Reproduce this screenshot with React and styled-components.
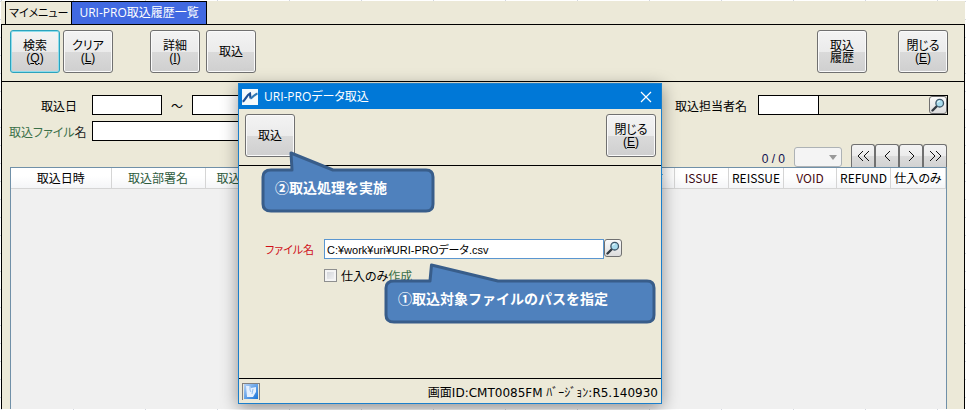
import styled, { createGlobalStyle } from 'styled-components'

const columns = [
  { label: '取込日時', width: 100 },
  { label: '取込部署名', width: 94, color: '#2c5a3c' },
  { label: '取込担当者名', width: 95, color: '#2c5a3c' },
  { label: '取込ファイル名' },
  { label: 'PDF', width: 46 },
  { label: 'ISSUE', width: 54, color: '#3a0a12' },
  { label: 'REISSUE', width: 55 },
  { label: 'VOID', width: 53, color: '#4a0a12' },
  { label: 'REFUND', width: 54 },
  { label: '仕入のみ', width: 55 },
]

const pagers = [
  { name: '最初', points: ['7,2 2,7 7,12', '13,2 8,7 13,12'] },
  { name: '前へ', points: ['10,2 5,7 10,12'] },
  { name: '次へ', points: ['5,2 10,7 5,12'] },
  { name: '最後', points: ['2,2 7,7 2,12', '8,2 13,7 8,12'] },
]

const Magnifier = () => (
  <svg width="14" height="14" viewBox="0 0 14 14">
    <path d="M1.5 12.5L6 8" stroke="#333a42" strokeWidth="2.4" strokeLinecap="round" />
    <circle cx="8.7" cy="5.2" r="3.8" fill="#a9dcee" stroke="#3c5568" strokeWidth="1.3" />
    <path d="M6.6 4.6a2.3 2.3 0 0 1 2.2-1.6" fill="none" stroke="#fff" strokeWidth="1" />
  </svg>
)

const AppLogo = () => (
  <svg width="16" height="16" viewBox="0 0 16 16">
    <rect width="16" height="16" fill="#f4fafc" />
    <path d="M0.500 12.500C3 12 4.500 6 8 4.500L8.500 9.500" fill="none" stroke="#1c4f96" strokeWidth="2.2" />
    <path d="M8.500 9.500C10.500 9 12 5.500 15.500 4.500" fill="none" stroke="#2f78b4" strokeWidth="2.2" />
  </svg>
)

const StatusIcon = () => (
  <svg width="14" height="15" viewBox="0 0 14 15">
    <defs>
      <linearGradient id="status" x1="0" y1="0" x2="1" y2="1">
        <stop offset="0" stopColor="#b4d2f6" />
        <stop offset="1" stopColor="#1673d8" />
      </linearGradient>
    </defs>
    <rect width="14" height="15" fill="url(#status)" />
    <path d="M2 2h4l1 2 5-1v5l-3 5H3z" fill="#e4f0fe" />
    <path d="M6 2v4l1 2M9 5l-1 5" fill="none" stroke="#8cbcf0" strokeWidth="1" />
  </svg>
)

const ToolButton = ({ label, accessKey, sub, active }) => (
  <StyledToolButton type="button" $active={active}>
    <span>{label}</span>
    {accessKey && <span>(<u>{accessKey}</u>)</span>}
    {sub && <span>{sub}</span>}
  </StyledToolButton>
)

const Callout = ({ text, variant }) => (
  <StyledCallout className={variant}>
    {variant === 'first' ? (
      <svg width="273" height="62" viewBox="0 0 273 62">
        <path d="M10 18H46L47.500 2L114 18H263Q270 18 270 25V52Q270 59 263 59H10Q2 59 2 52V25Q2 18 10 18Z" />
      </svg>
    ) : (
      <svg width="176" height="64" viewBox="0 0 176 64">
        <path d="M10 20H31L30 3L72 20H165Q172 20 172 27V54Q172 61 165 61H10Q2 61 2 54V27Q2 20 10 20Z" />
      </svg>
    )}
    <p>{text}</p>
  </StyledCallout>
)

const ImportDialog = () => (
  <StyledDialog role="dialog" aria-labelledby="dialog-title">
    <header>
      <AppLogo />
      <h1 id="dialog-title">URI-PROデータ取込</h1>
      <button type="button" aria-label="閉じる">
        <svg width="12" height="12" viewBox="0 0 12 12">
          <path d="M1 1l10 10M11 1L1 11" stroke="#fff" strokeWidth="1.2" />
        </svg>
      </button>
    </header>
    <DialogTools>
      <ToolButton label="取込" />
      <ToolButton label="閉じる" accessKey="E" />
    </DialogTools>
    <DialogBody>
      <label htmlFor="path">ファイル名</label>
      <div className="path">
        <input id="path" type="text" defaultValue="C:¥work¥uri¥URI-PROデータ.csv" />
        <LookupButton type="button" aria-label="参照"><Magnifier /></LookupButton>
      </div>
      <div className="check">
        <input id="only" type="checkbox" />
        <label htmlFor="only">仕入のみ<span>作成</span></label>
      </div>
    </DialogBody>
    <footer>
      <StatusBox><StatusIcon /></StatusBox>
      <span>画面ID:CMT0085FM ﾊﾞｰｼﾞｮﾝ:R5.140930</span>
    </footer>
    <Callout variant="second" text="②取込処理を実施" />
    <Callout variant="first" text="①取込対象ファイルのパスを指定" />
  </StyledDialog>
)

const App = () => (
  <Screen>
    <GlobalStyle />
    <Tabs>
      <button type="button">マイメニュー</button>
      <button type="button" className="current">URI-PRO取込履歴一覧</button>
    </Tabs>
    <Frame>
      <Toolbar>
        <ButtonGroup>
          <ToolButton label="検索" accessKey="Q" active />
          <ToolButton label="クリア" accessKey="L" />
        </ButtonGroup>
        <ButtonGroup $gap={6}>
          <ToolButton label="詳細" accessKey="I" />
          <ToolButton label="取込" />
        </ButtonGroup>
        <ButtonGroup $gap={31} $end>
          <ToolButton label="取込" sub="履歴" />
          <ToolButton label="閉じる" accessKey="E" />
        </ButtonGroup>
      </Toolbar>
      <Search>
        <SearchRow>
          <FieldLabel htmlFor="from" $inset>取込日</FieldLabel>
          <TextBox id="from" $width={70} />
          <span className="tilde">～</span>
          <TextBox aria-label="取込日（終了）" $width={70} />
          <div className="person">
            <label htmlFor="person">取込担当者名</label>
            <PersonBox>
              <input id="person" type="text" />
              <LookupButton type="button" aria-label="担当者検索"><Magnifier /></LookupButton>
            </PersonBox>
          </div>
        </SearchRow>
        <SearchRow>
          <FieldLabel htmlFor="file" $green>取込ファイル<span>名</span></FieldLabel>
          <TextBox id="file" $width={300} />
        </SearchRow>
      </Search>
      <Pager>
        <output>0 / 0</output>
        <div className="select">
          <select aria-label="ページ" disabled />
          <svg width="8" height="5" viewBox="0 0 8 5"><path d="M0 0h8L4 5z" fill="#999" /></svg>
        </div>
        <div className="buttons">
          {pagers.map(({ name, points }) => (
            <button key={name} type="button" aria-label={name}>
              <svg width="15" height="14" viewBox="0 0 15 14">
                {points.map((p) => <polyline key={p} points={p} fill="none" stroke="#111" />)}
              </svg>
            </button>
          ))}
        </div>
      </Pager>
      <Grid>
        <table>
          <colgroup>
            {columns.map(({ label, width }) => <col key={label} width={width} />)}
          </colgroup>
          <thead>
            <tr>
              {columns.map(({ label, color }) => <HeadCell key={label} $color={color}>{label}</HeadCell>)}
            </tr>
          </thead>
        </table>
      </Grid>
    </Frame>
    <ImportDialog />
  </Screen>
)

const GlobalStyle = createGlobalStyle`
  * {
    box-sizing: border-box;
  }

  body {
    margin: 0;
    background: #fff;
    color: #000;
    font-family: "Liberation Sans", "Noto Sans CJK JP", sans-serif;
    font-size: 12px;
    font-feature-settings: "palt";
  }

  button, input, select {
    margin: 0;
    padding: 0;
    color: inherit;
    font: inherit;
    font-feature-settings: inherit;
  }

  svg {
    display: block;
    flex: none;
  }
`

const Screen = styled.div`
  position: relative;
  display: flex;
  flex-direction: column;
  min-height: 100vh;
  padding: 1px;
  overflow: hidden;
  background:
    repeating-linear-gradient(to right, transparent 0 1px, #d4d8e0 1px 2px, transparent 2px 72px),
    repeating-linear-gradient(to bottom, transparent 0 1px, #d4d8e0 1px 2px, transparent 2px 18px),
    #fff;
`

const Tabs = styled.nav`
  display: flex;
  padding-left: 4px;
  background: #ece9d8;

  button {
    height: 23px;
    padding: 0 3px;
    border: 1px solid #000;
    border-bottom: 0;
    background: #ece9d8;
    font-size: 11px;
    line-height: 20px;
    white-space: nowrap;
  }

  .current {
    margin-left: -1px;
    padding: 0 7px;
    background: #4169e1;
    color: #fff;
    font-family: "Open Sans", "Noto Sans CJK JP", sans-serif;
    font-size: 12px;
  }
`

const Frame = styled.main`
  display: flex;
  flex: 1;
  flex-direction: column;
  border: 1px solid #000;
  border-bottom: 0;
  background: #ece9d8;
`

const Toolbar = styled.div`
  display: flex;
  gap: 37px;
  padding: 5px 16px 8px 8px;
  border-bottom: 1px solid #000;
`

const ButtonGroup = styled.div`
  display: flex;
  gap: ${({ $gap }) => $gap || 3}px;
  margin-left: ${({ $end }) => ($end ? 'auto' : 0)};
`

const StyledToolButton = styled.button`
  display: flex;
  flex-direction: column;
  align-items: center;
  justify-content: center;
  width: 50px;
  height: 43px;
  border: 1px solid ${({ $active }) => ($active ? '#2ba3bd' : '#707070')};
  border-radius: 3px;
  background: linear-gradient(#f3f3f3, #ebebeb 50%, #dadada 50%, #cfcfcf);
  box-shadow: inset 0 0 0 1px ${({ $active }) => ($active ? '#8ddcec' : '#fafafa')};
  line-height: 12px;
`

const Search = styled.div`
  display: flex;
  flex-direction: column;
  gap: 6px;
  padding: 13px 16px 0 7px;
`

const SearchRow = styled.div`
  display: flex;
  align-items: center;
  height: 20px;

  .tilde {
    width: 30px;
    text-align: center;
  }

  .person {
    display: flex;
    gap: 11px;
    align-items: center;
    margin-left: auto;
  }
`

const FieldLabel = styled.label`
  flex: none;
  width: 83px;
  padding-right: ${({ $inset }) => ($inset ? 15 : 0)}px;
  color: ${({ $green }) => ($green ? '#3a7048' : '#000')};
  text-align: ${({ $inset }) => ($inset ? 'right' : 'left')};

  span {
    color: #222;
  }
`

const TextBox = styled.input.attrs({ type: 'text' })`
  width: ${({ $width }) => $width}px;
  height: 20px;
  border: 1px solid #000;
  background: #fff;
`

const LookupButton = styled.button`
  display: flex;
  align-items: center;
  justify-content: center;
  width: 18px;
  height: 18px;
  border: 1px solid #707070;
  border-radius: 3px;
  background: linear-gradient(#fafafa, #ececec 50%, #dcdcdc);
`

const PersonBox = styled.div`
  display: flex;
  justify-content: space-between;
  width: 190px;
  height: 20px;
  border: 1px solid #000;

  input {
    width: 60px;
    border: 0;
    border-right: 1px solid #000;
    background: #fff;
  }
`

const Pager = styled.div`
  display: flex;
  align-items: flex-end;
  justify-content: flex-end;
  padding: 3px 17px 0 0;

  output {
    margin-right: 9px;
    color: #101050;
    line-height: 16px;
  }

  .select {
    display: grid;
    align-items: center;
    margin-right: 9px;

    > * {
      grid-area: 1 / 1;
    }

    svg {
      justify-self: end;
      margin-right: 5px;
    }
  }

  select {
    width: 48px;
    height: 20px;
    border: 1px solid #adb2b5;
    border-radius: 3px;
    background: #f4f4f4;
    opacity: 1;
    appearance: none;
  }

  .buttons {
    display: flex;
  }

  .buttons button {
    display: flex;
    align-items: center;
    justify-content: center;
    width: 24px;
    height: 23px;
    border: 1px solid #707070;
    border-bottom: 0;
    border-radius: 3px 3px 0 0;
    background: linear-gradient(#f3f3f3, #ebebeb 50%, #dcdcdc 50%, #d2d2d2);
  }
`

const Grid = styled.div`
  flex: 1;
  margin: 0 17px 0 8px;
  border: 1px solid #7090a8;
  border-bottom: 0;
  background: #f0f0f0;

  table {
    width: 100%;
    border-collapse: collapse;
    table-layout: fixed;
  }
`

const HeadCell = styled.th`
  height: 20px;
  padding: 0;
  border-right: 1px solid #d5d5d5;
  border-bottom: 1px solid #d5d5d5;
  background: linear-gradient(#fff 40%, #f4f5f7);
  color: ${({ $color }) => $color || '#000'};
  font-family: "Noto Sans CJK JP", sans-serif;
  font-weight: normal;
  line-height: 18px;
  white-space: nowrap;
`

const StyledDialog = styled.section`
  position: absolute;
  top: 83px;
  left: 238px;
  display: flex;
  flex-direction: column;
  width: 424px;
  height: 321px;
  border: 1px solid #1a7fcc;
  background: #ece9d8;
  box-shadow: 0 4px 16px rgba(0, 0, 0, 0.4);

  header {
    display: flex;
    align-items: center;
    height: 25px;
    padding: 0 9px 0 3px;
    background: #0078d7;
    color: #fff;
  }

  h1 {
    flex: 1;
    margin: 0 0 0 6px;
    font-family: "Open Sans", "Noto Sans CJK JP", sans-serif;
    font-size: 12px;
    font-weight: normal;
    line-height: 20px;
  }

  header button {
    border: 0;
    background: none;
  }

  footer {
    display: flex;
    align-items: center;
    justify-content: space-between;
    height: 25px;
    padding: 0 3px;
    border-top: 1px solid #000;
    font-family: "DejaVu Sans", "Noto Sans CJK JP", sans-serif;
    font-size: 12px;
  }
`

const DialogTools = styled.div`
  display: flex;
  justify-content: space-between;
  padding: 5px 5px 8px 6px;
  border-bottom: 1px solid #000;
`

const DialogBody = styled.div`
  display: grid;
  flex: 1;
  grid-template-columns: 59px 1fr;
  grid-auto-rows: 20px;
  row-gap: 6px;
  align-items: center;
  align-content: start;
  padding: 73px 0 0 26px;

  > label {
    color: #d01018;
    font-size: 11px;
  }

  .path {
    display: flex;
  }

  .path input {
    width: 280px;
    height: 20px;
    padding: 0 2px;
    border: 1px solid #5a96d0;
    background: #fff;
    font-size: 11px;
  }

  .check {
    display: flex;
    grid-column: 2;
    gap: 4px;
    align-items: center;
  }

  .check input {
    width: 13px;
    height: 13px;
    border: 1px solid #8e8f8f;
    background: linear-gradient(135deg, #cdd0d5, #f6f6f6);
    box-shadow: inset 0 0 0 2px #f4f4f4;
    appearance: none;
  }

  .check span {
    color: #3a7048;
  }
`

const StatusBox = styled.span`
  display: flex;
  align-items: center;
  justify-content: center;
  width: 18px;
  height: 17px;
  border: 1px solid #808080;
  border-bottom: 0;
`

const StyledCallout = styled.div`
  position: absolute;
  display: grid;

  &.first {
    top: 179px;
    left: 145px;
  }

  &.second {
    top: 66px;
    left: 22px;
  }

  > * {
    grid-area: 1 / 1;
  }

  path {
    fill: #4f81bd;
    stroke: #385d8a;
    stroke-width: 3;
    stroke-linejoin: round;
  }

  p {
    z-index: 1;
    align-self: end;
    margin: 0;
    padding: 0 0 18px 14px;
    color: #fff;
    font-size: 14px;
    font-feature-settings: normal;
    font-weight: bold;
    line-height: 16px;
    white-space: nowrap;
  }
`

export default App
